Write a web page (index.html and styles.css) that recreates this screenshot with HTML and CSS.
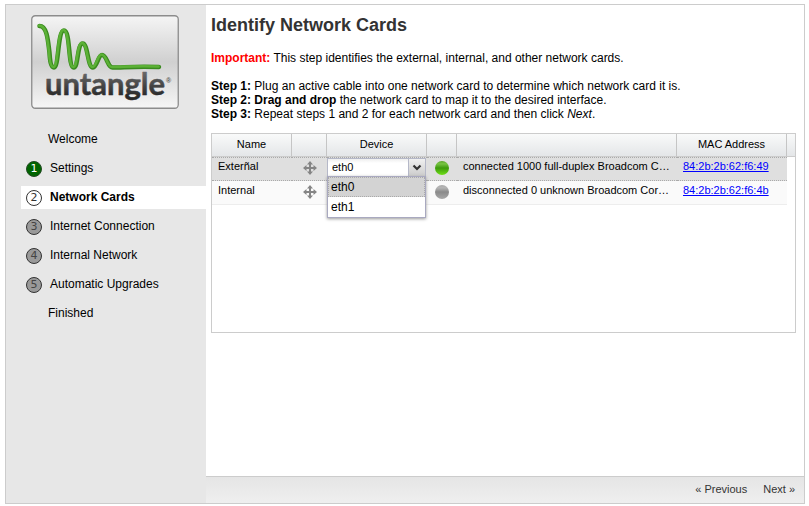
FILE: index.html
```html
<!DOCTYPE html>
<html lang="en">
<head>
<meta charset="utf-8">
<title>Identify Network Cards</title>
<link rel="stylesheet" href="styles.css">
</head>
<body>
<svg width="0" height="0" class="defs" aria-hidden="true">
  <defs>
    <symbol id="move" viewBox="0 0 14 14">
      <path d="M7 1v12M1 7h12" stroke="#858585" stroke-width="2" fill="none"/>
      <path d="M7 0 10 3.500H4zM7 14 4 10.500h6zM0 7 3.500 4v6zM14 7 10.500 10V4z" fill="#858585"/>
    </symbol>
  </defs>
</svg>
<div class="wizard">
  <aside class="sidebar">
    <svg class="logo" viewBox="0 0 148 94" role="img" aria-label="untangle">
      <defs>
        <linearGradient id="plate" x1="0" y1="0" x2="0" y2="1">
          <stop offset="0" stop-color="#f5f5f5"/>
          <stop offset=".5" stop-color="#d0d0d0"/>
          <stop offset="1" stop-color="#f6f6f6"/>
        </linearGradient>
        <linearGradient id="ink" x1="0" y1="0" x2="0" y2="1">
          <stop offset=".2" stop-color="#6a6a6a"/>
          <stop offset=".85" stop-color="#292929"/>
        </linearGradient>
      </defs>
      <rect x=".75" y=".75" width="146.500" height="92.500" rx="3.500" fill="url(#plate)" stroke="#8c8c8c" stroke-width="1.300"/>
      <g fill="none" stroke-linecap="round" stroke-linejoin="round">
        <path d="M8.500 11C16 11 17 25 18.500 38C19 46 20 52.500 23 52.500C28 52.500 26.500 15.500 33 15.500C39.500 15.500 37 52.500 42.700 52.500C47.500 52.500 46 28.500 51.700 28.500C57 28.500 56.500 52.500 62 52.500C66 52.500 67 40 71 40C76 40 76.500 52.500 81.500 52.500C93 52.500 104 51 128 52" stroke="#3a8a1f" stroke-width="4.500"/>
        <path d="M8 10.500C15.500 10.500 16.500 24.500 18 37.500C18.500 45.500 19.500 52 22.500 52C27.500 52 26 15 32.500 15C39 15 36.500 52 42.200 52C47 52 45.500 28 51.200 28C56.500 28 56 52 61.500 52C65.500 52 66.500 39.500 70.500 39.500C75.500 39.500 76 52 81 52C92.500 52 103.500 50.500 127.500 51.500" stroke="#5cb136" stroke-width="2.600"/>
      </g>
      <text x="14" y="80" class="wordmark">untangle</text>
      <text x="135" y="68" class="reg">®</text>
    </svg>
    <ol class="steps">
      <li class="step plain">Welcome</li>
      <li class="step"><span class="num done">1</span>Settings</li>
      <li class="step active" aria-current="step"><span class="num current">2</span>Network Cards</li>
      <li class="step"><span class="num">3</span>Internet Connection</li>
      <li class="step"><span class="num">4</span>Internal Network</li>
      <li class="step"><span class="num">5</span>Automatic Upgrades</li>
      <li class="step plain">Finished</li>
    </ol>
  </aside>
  <main class="main">
    <section class="content">
      <h1>Identify Network Cards</h1>
      <p class="note"><strong class="important">Important:</strong> This step identifies the external, internal, and other network cards.</p>
      <p class="help"><b>Step 1:</b> Plug an active cable into one network card to determine which network card it is.<br>
      <b>Step 2: Drag and drop</b> the network card to map it to the desired interface.<br>
      <b>Step 3:</b> Repeat steps 1 and 2 for each network card and then click <i>Next</i>.</p>
      <div class="grid">
        <table>
          <colgroup><col class="c-name"><col class="c-move"><col class="c-device"><col class="c-status"><col class="c-info"><col class="c-mac"><col class="c-end"></colgroup>
          <thead>
            <tr><th>Name</th><th></th><th>Device</th><th></th><th></th><th>MAC Address</th><th></th></tr>
          </thead>
          <tbody>
            <tr class="selected">
              <td>Exterñal</td>
              <td class="icon"><svg class="move"><use href="#move"/></svg></td>
              <td class="editor">
                <div class="combo">
                  <select aria-label="Device"><option>eth0</option><option>eth1</option></select>
                  <span class="trigger"><svg viewBox="0 0 16 17"><path d="M4.500 6.500 8 10l3.500-3.500" fill="none" stroke="#333" stroke-width="2.200"/></svg></span>
                  <ul class="options"><li class="on">eth0</li><li>eth1</li></ul>
                </div>
              </td>
              <td class="icon"><span class="led up"></span></td>
              <td>connected 1000 full-duplex Broadcom C…</td>
              <td><a href="#">84:2b:2b:62:f6:49</a></td>
              <td class="blank"></td>
            </tr>
            <tr class="alt">
              <td>Internal</td>
              <td class="icon"><svg class="move"><use href="#move"/></svg></td>
              <td></td>
              <td class="icon"><span class="led"></span></td>
              <td>disconnected 0 unknown Broadcom Cor…</td>
              <td><a href="#">84:2b:2b:62:f6:4b</a></td>
              <td class="blank"></td>
            </tr>
          </tbody>
        </table>
      </div>
    </section>
    <footer class="bar">
      <button type="button">« Previous</button>
      <button type="button">Next »</button>
    </footer>
  </main>
</div>
</body>
</html>
```
FILE: styles.css
```css
* { box-sizing: border-box; }
body {
  margin: 0;
  padding: 4px 4px 2px 5px;
  min-height: 100vh;
  display: flex;
  background: #fff;
  color: #000;
  font: 12px/14px "Liberation Sans", Arial, sans-serif;
}
h1, p, ul, ol { margin: 0; padding: 0; }
ul, ol { list-style: none; }
.defs { position: absolute; }

.wizard { flex: 1; display: flex; border: 1px solid #ccc; }
.sidebar { width: 200px; flex: none; padding: 10px 0 0 15px; background: #e7e7e7; }
.logo { display: block; width: 148px; height: 94px; margin: 0 0 19px 10px; }
.wordmark {
  font: 700 31px Lato, sans-serif;
  fill: url(#ink);
  stroke: url(#ink);
  stroke-width: 0.5;
  stroke-linejoin: round;
}
.reg { font: 700 7px "Liberation Sans", sans-serif; fill: #555; }

.steps { display: flex; flex-direction: column; gap: 6px; }
.step { display: flex; gap: 8px; height: 23px; padding-left: 5px; line-height: 22px; }
.plain { padding-left: 27px; }
.active { background: #fff; font-weight: bold; }
.num {
  width: 16px;
  height: 16px;
  margin-top: 4px;
  border: 1px solid #333;
  border-radius: 50%;
  background: #999;
  color: #444;
  font: 11px/14px "DejaVu Sans", sans-serif;
  text-align: center;
}
.done { background: #006400; border-color: #234a23; color: #fff; }
.current { background: #fff; color: #333; }

.main { flex: 1; min-width: 0; display: flex; flex-direction: column; }
.content { flex: 1; padding: 9px 8px 0 5px; }
h1 { font-size: 18px; line-height: 22px; color: #333; margin-bottom: 15px; }
.note { margin-bottom: 14px; }
.important { color: #f00; }
.help { margin-bottom: 12px; }

.grid { height: 200px; border: 1px solid #ccc; font-size: 11px; }
table { width: 100%; table-layout: fixed; border-collapse: separate; border-spacing: 0; }
.c-name { width: 80px; }
.c-move { width: 35px; }
.c-device { width: 100px; }
.c-status { width: 30px; }
.c-mac { width: 110px; }
.c-end { width: 8px; }
th {
  height: 23px;
  padding: 0 0 2px;
  font-weight: normal;
  background: linear-gradient(#f9fafa, #e4e6e8);
  border-right: 1px solid #c5c5c5;
  border-bottom: 1px solid #ccc;
}
th:last-child { border-right: 0; }
td {
  height: 24px;
  padding: 0 6px 6px;
  overflow: hidden;
  white-space: nowrap;
}
.selected td { background: #dfdfdf; border-top: 1px dotted #aaa; border-bottom: 1px dotted #aaa; }
.alt td { background: #fafafa; border-bottom: 1px solid #ededed; }
tr .blank { background: none; border: 0; padding: 0; }
tr .icon { padding: 0 0 2px; text-align: center; }
tr .editor { padding: 0; overflow: visible; vertical-align: top; }
.icon > * { display: block; margin: 0 auto; }
.move { width: 14px; height: 14px; }
.led {
  width: 14px;
  height: 14px;
  border-radius: 50%;
  background: linear-gradient(#aaa 0, #b5b5b5 20%, #8a8a8a 50%, #a8a8a8 100%);
}
.up { background: linear-gradient(#5aa52a 0, #78c444 20%, #3d9a0c 50%, #6fe016 100%); }
a { color: #00f; }

.combo { position: relative; height: 19px; display: flex; width: 99px; }
select {
  appearance: none;
  width: 100%;
  padding: 0 20px 2px 4px;
  border: 1px solid #b5b8c8;
  border-radius: 0;
  background: linear-gradient(#eee, #fff 4px);
  color: #000;
  font: 11px/14px "Liberation Sans", Arial, sans-serif;
}
.trigger {
  position: absolute;
  top: 1px;
  right: 1px;
  width: 17px;
  height: 17px;
  border-left: 1px solid #b5b8c8;
  background: linear-gradient(#f0f0f0, #ccc);
  pointer-events: none;
}
.trigger svg { display: block; width: 16px; height: 17px; }
.options {
  position: absolute;
  z-index: 2;
  top: 18px;
  left: 0;
  width: 100%;
  border: 1px solid #a9a9c0;
  background: #fff;
  box-shadow: 0 1px 3px #999;
  font-size: 12px;
}
.options li { padding: 2px 3px; line-height: 16px; }
.options .on { background: #d3d3d3; outline: 1px dotted #aaa; outline-offset: -1px; }

.bar {
  display: flex;
  justify-content: flex-end;
  gap: 16px;
  height: 27px;
  padding: 0 9px 2px;
  border-top: 1px solid #ccc;
  background: linear-gradient(#e5e5e5, #efefef);
}
button { padding: 0; border: 0; background: none; color: #333; font: 11px/14px "Liberation Sans", Arial, sans-serif; }
```
